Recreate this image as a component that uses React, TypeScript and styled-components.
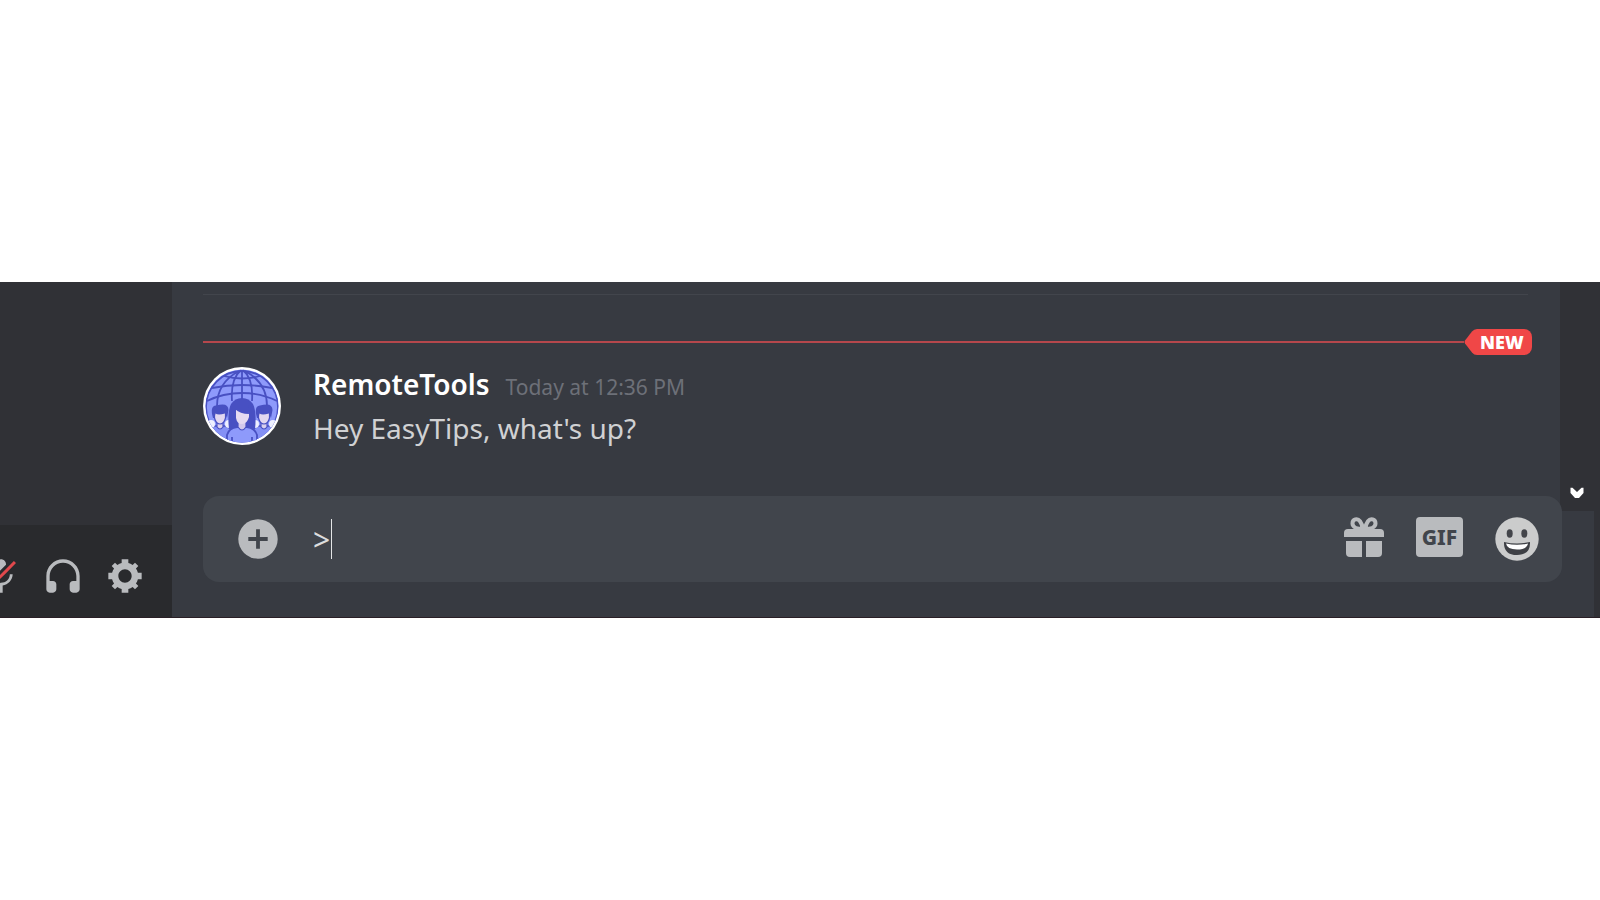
import React, { useState } from "react";
import styled, { createGlobalStyle } from "styled-components";

const GlobalStyle = createGlobalStyle`
  * { box-sizing: border-box; }
  body {
    margin: 0;
    background: #ffffff;
    font-family: "Noto Sans", "Open Sans", sans-serif;
  }
`;

const Page = styled.div`
  padding: 282px 0;
  overflow: hidden;
`;

const AppWindow = styled.div`
  display: flex;
  background: #303136;
  border-bottom: 1px solid #2a1f26;
  overflow: hidden;
`;

const Sidebar = styled.aside`
  flex: 0 0 172px;
  min-width: 0;
  display: flex;
  flex-direction: column;
  justify-content: flex-end;
  background: #303136;
`;

const UserPanel = styled.div`
  display: flex;
  justify-content: flex-end;
  align-items: center;
  gap: 22px;
  height: 92px;
  padding: 10px 27px 0 0;
  background: #292a2d;
`;

const IconButton = styled.button`
  flex: none;
  display: block;
  padding: 0;
  border: 0;
  background: none;
  color: #b9bbbe;
  cursor: pointer;
  svg { display: block; }
`;

const Main = styled.main`
  flex: 1;
  min-width: 0;
`;

const ChatRow = styled.div`
  display: flex;
`;

const Messages = styled.section`
  flex: 1;
  min-width: 0;
  height: 229px;
  padding: 12px 28px 0 31px;
  background: #373a41;
`;

const Divider = styled.hr`
  height: 1px;
  margin: 0 4px 34px 0;
  border: 0;
  background: #42454c;
`;

const Unread = styled.div`
  display: flex;
  align-items: center;
  height: 26px;
`;

const UnreadLine = styled.div`
  flex: 1;
  height: 2px;
  background: #b5474c;
`;

const UnreadTag = styled.div`
  display: flex;
  color: #f04747;
  svg { display: block; }
`;

const UnreadText = styled.span`
  width: 54px;
  height: 26px;
  border-radius: 0 8px 8px 0;
  background: #f04747;
  color: #ffffff;
  font-size: 18px;
  font-weight: 900;
  line-height: 26px;
  padding-left: 2px;
`;

const Message = styled.article`
  display: flex;
  gap: 32px;
  padding-top: 12px;
`;

const Body = styled.div`
  flex: 1;
`;

const Heading = styled.div`
  display: flex;
  align-items: baseline;
  gap: 16px;
  line-height: 34px;
`;

const Author = styled.h2`
  margin: 0;
  color: #ffffff;
  font-size: 28px;
  font-weight: 600;
`;

const Time = styled.time`
  color: #6d7078;
  font-size: 21px;
`;

const Text = styled.p`
  margin: 0;
  color: #d0d1d3;
  font-size: 28px;
  line-height: 48px;
`;

const Rail = styled.div`
  flex: 0 0 40px;
  display: flex;
  align-items: flex-end;
  justify-content: center;
  padding: 0 7px 12px 0;
  background: #303136;
`;

const Footer = styled.form`
  margin-right: 6px;
  padding: 0 32px 35px 31px;
  background: #373a41;
`;

const Composer = styled.div`
  position: relative;
  display: flex;
  align-items: center;
  height: 86px;
  margin-top: -15px;
  padding: 0 23px 0 35px;
  border-radius: 16px;
  background: #41454c;
`;

const Field = styled.label`
  position: relative;
  flex: 1;
  display: flex;
  margin-left: 35px;
`;

const Input = styled.input`
  width: 100%;
  height: 40px;
  padding: 0;
  border: 0;
  outline: 0;
  background: transparent;
  color: #dcddde;
  caret-color: transparent;
  font-family: inherit;
  font-size: 30px;
`;

const Caret = styled.span`
  position: absolute;
  left: 18px;
  top: 0;
  width: 1px;
  height: 40px;
  background: #e4e5e6;
`;

const Tools = styled.div`
  display: flex;
  align-items: flex-start;
  gap: 32px;
`;

const GifButton = styled(IconButton)`
  width: 47px;
  height: 40px;
  border-radius: 4px;
  background: #b9bbbe;
  color: #41454c;
  font-family: inherit;
  font-size: 21px;
  font-weight: 800;
  line-height: 40px;
  text-align: center;
`;

const MutedMic = () => (
  <svg width="40" height="40" viewBox="0 0 24 24" fill="currentColor">
    <path d="M6.7 11H5C5 12.19 5.34 13.3 5.9 14.28L7.13 13.05C6.86 12.43 6.7 11.74 6.7 11Z" />
    <path d="M9.01 11.085C9.015 11.1125 9.02 11.14 9.02 11.17L15 5.18V5C15 3.34 13.66 2 12 2C10.34 2 9 3.34 9 5V11C9 11.03 9.005 11.0575 9.01 11.085Z" />
    <path d="M11.7237 16.0927L10.9632 16.8531L10.2533 17.5688C10.4978 17.633 10.747 17.6839 11 17.72V22H13V17.72C16.28 17.23 19 14.41 19 11H17.3C17.3 14 14.76 16.1 12 16.1C11.9076 16.1 11.8155 16.0975 11.7237 16.0927Z" />
    <path fill="#e0484c" d="M21 4.27L19.73 3L3 19.73L4.27 21L8.46 16.82L9.69 15.58L11.35 13.92L14.99 10.28L21 4.27Z" />
  </svg>
);

const Headphones = () => (
  <svg width="40" height="40" viewBox="0 0 24 24" fill="currentColor">
    <path d="M12 2C6.486 2 2 6.485 2 12V20C2 21.104 2.895 22 4 22H6C7.104 22 8 21.104 8 20V17C8 15.896 7.104 15 6 15H4V12C4 7.588 7.589 4 12 4C16.411 4 20 7.588 20 12V15H18C16.896 15 16 15.896 16 17V20C16 21.104 16.896 22 18 22H20C21.104 22 22 21.104 22 20V12C22 6.485 17.514 2 12 2Z" />
  </svg>
);

const Gear = () => (
  <svg width="40" height="40" viewBox="0 0 24 24" fill="currentColor">
    <path
      fillRule="evenodd"
      d="M19.738 10H22V14H19.739C19.498 14.931 19.1 15.798 18.565 16.564L20 18L18 20L16.565 18.564C15.797 19.099 14.932 19.498 14 19.738V22H10V19.738C9.069 19.498 8.203 19.099 7.436 18.564L6 20L4 18L5.436 16.564C4.901 15.799 4.502 14.932 4.262 14H2V10H4.262C4.502 9.068 4.9 8.202 5.436 7.436L4 6L6 4L7.436 5.436C8.202 4.9 9.068 4.502 10 4.262V2H14V4.261C14.932 4.502 15.797 4.9 16.565 5.435L18 3.999L20 5.999L18.564 7.436C19.099 8.202 19.498 9.069 19.738 10ZM12 16C14.2091 16 16 14.2091 16 12C16 9.79086 14.2091 8 12 8C9.79086 8 8 9.79086 8 12C8 14.2091 9.79086 16 12 16Z"
    />
  </svg>
);

const Plus = () => (
  <svg width="40" height="40" viewBox="0 0 40 40">
    <circle cx="20" cy="20" r="19.7" fill="currentColor" />
    <path d="M20 10.3V29.7M10.3 20H29.7" stroke="#41454c" strokeWidth="3.8" />
  </svg>
);

const Gift = () => (
  <svg width="40" height="40" viewBox="0 0 40 40" fill="currentColor">
    <path d="M19 12C14 12 8.500 10.500 8.500 6.500C8.500 2 13.500 .8 16 4.200C17.600 6.300 18.500 9.300 19 12Z" fill="none" stroke="currentColor" strokeWidth="4" />
    <path d="M21 12C26 12 31.500 10.500 31.500 6.500C31.500 2 26.500 .8 24 4.200C22.400 6.300 21.500 9.300 21 12Z" fill="none" stroke="currentColor" strokeWidth="4" />
    <path d="M4 12H36Q40 12 40 16V20H0V16Q0 12 4 12Z" />
    <path d="M2 24H18V40H6Q2 40 2 36Z" />
    <path d="M22 24H38V36Q38 40 34 40H22Z" />
  </svg>
);

const Smiley = () => (
  <svg width="44" height="44" viewBox="0 0 44 44">
    <circle cx="22" cy="22" r="21.700" fill="#cbcccc" />
    <ellipse cx="14.700" cy="16.500" rx="3" ry="4.200" fill="#43454a" />
    <ellipse cx="29.300" cy="16.500" rx="3" ry="4.200" fill="#43454a" />
    <path d="M9 25Q22 28 35 25Q35.500 38 22 38Q8.500 38 9 25Z" fill="#3e4045" />
    <path d="M11 26.600Q22 29 33 26.600Q32 32.500 22 32.500Q12 32.500 11 26.600Z" fill="#fff" />
  </svg>
);

const SideMember = ({ x }: { x: number }) => (
  <g transform={`translate(${x} 0)`}>
    <path d="M-15 80V67Q-12 61 -5 59H5Q12 61 15 67V80Z" fill="#8490f5" stroke="#4850c2" strokeWidth="1.600" />
    <circle cx="-9" cy="57" r="4" fill="#eef0ff" />
    <circle cx="9" cy="57" r="4" fill="#eef0ff" />
    <path d="M-3 54H3V60Q0 64 -3 60Z" fill="#d9d0ee" stroke="#4850c2" strokeWidth="1.200" />
    <path d="M-5.500 45H5.500V51Q4 57 0 57Q-4 57 -5.500 51Z" fill="#e2d7f0" stroke="#4850c2" strokeWidth="1.200" />
    <path d="M-7 51Q-10.500 39 -4 38.500Q8.500 35 8.500 43L7 51L5 46.500Q-2 48.500 -4.500 46.500L-5.500 51Z" fill="#4850c2" />
  </g>
);

const Avatar = () => (
  <svg width="78" height="78" viewBox="0 0 78 78" role="img" aria-label="RemoteTools avatar">
    <defs>
      <clipPath id="avatar-disc">
        <circle cx="39" cy="39" r="36.500" />
      </clipPath>
    </defs>
    <circle cx="39" cy="39" r="39" fill="#fff" />
    <g clipPath="url(#avatar-disc)">
      <rect width="78" height="78" fill="#8e9afb" />
      <g fill="none" stroke="#4850c2" strokeWidth="1.800">
        <circle cx="39" cy="40" r="36" />
        <path d="M39 3V34M38 3C31 9 28 20 29 34M40 3C47 9 50 20 49 34M36 4C21 12 14 23 14 39M42 4C57 12 64 23 64 39" />
        <path d="M21 9Q39 14 57 9M9 21Q39 15 69 21M4 34Q20 26 39 26Q58 26 74 34" />
      </g>
      <SideMember x={17} />
      <SideMember x={61} />
      <path d="M26 62C25 53 25 43 28 37Q32 31 39 31Q46 31 50 37C53 43 53 53 52 62Z" fill="#4850c2" />
      <path d="M24 80V68Q26 61 34 60H44Q52 61 54 68V80Z" fill="#8e9afb" stroke="#4850c2" strokeWidth="1.800" />
      <path d="M29 80V70M49 80V70" stroke="#4850c2" strokeWidth="1.800" />
      <path d="M35 53H43V60Q39 66 35 60Z" fill="#d3c9ec" stroke="#4850c2" strokeWidth="1.200" />
      <path d="M33 43Q40 42 43 44L46 46V50Q44 57 39 57Q34 57 33 51Z" fill="#e5daf1" />
      <path d="M32 42Q37 47 46 47L45 38H33Z" fill="#4850c2" />
    </g>
  </svg>
);

export default function App() {
  const [draft, setDraft] = useState(">");
  return (
    <>
      <GlobalStyle />
      <Page>
        <AppWindow>
          <Sidebar>
            <UserPanel>
              <IconButton type="button" aria-label="Unmute"><MutedMic /></IconButton>
              <IconButton type="button" aria-label="Deafen"><Headphones /></IconButton>
              <IconButton type="button" aria-label="User settings"><Gear /></IconButton>
            </UserPanel>
          </Sidebar>
          <Main>
            <ChatRow>
              <Messages>
                <Divider />
                <Unread>
                  <UnreadLine />
                  <UnreadTag>
                    <svg width="14" height="26" viewBox="0 0 14 26" fill="currentColor">
                      <path d="M14 0H13Q10 0 8 2.500L1 11.500Q0 13 1 14.500L8 23.500Q10 26 13 26H14Z" />
                    </svg>
                    <UnreadText>NEW</UnreadText>
                  </UnreadTag>
                </Unread>
                <Message>
                  <Avatar />
                  <Body>
                    <Heading>
                      <Author>RemoteTools</Author>
                      <Time>Today at 12:36 PM</Time>
                    </Heading>
                    <Text>Hey EasyTips, what's up?</Text>
                  </Body>
                </Message>
              </Messages>
              <Rail>
                <IconButton type="button" aria-label="Scroll down">
                  <svg width="14" height="12" viewBox="0 0 14 12" fill="#fff">
                    <path d="M.5 .8H2.500L7 5L11.500 .8H13.500V6L9 11H5L.5 6Z" />
                  </svg>
                </IconButton>
              </Rail>
            </ChatRow>
            <Footer onSubmit={(e) => e.preventDefault()}>
              <Composer>
                <IconButton type="button" aria-label="Add attachment"><Plus /></IconButton>
                <Field>
                  <Input aria-label="Message" value={draft} onChange={(e) => setDraft(e.target.value)} />
                  <Caret />
                </Field>
                <Tools>
                  <IconButton type="button" aria-label="Send a gift"><Gift /></IconButton>
                  <GifButton type="button">GIF</GifButton>
                  <IconButton type="button" aria-label="Choose emoji"><Smiley /></IconButton>
                </Tools>
              </Composer>
            </Footer>
          </Main>
        </AppWindow>
      </Page>
    </>
  );
}
